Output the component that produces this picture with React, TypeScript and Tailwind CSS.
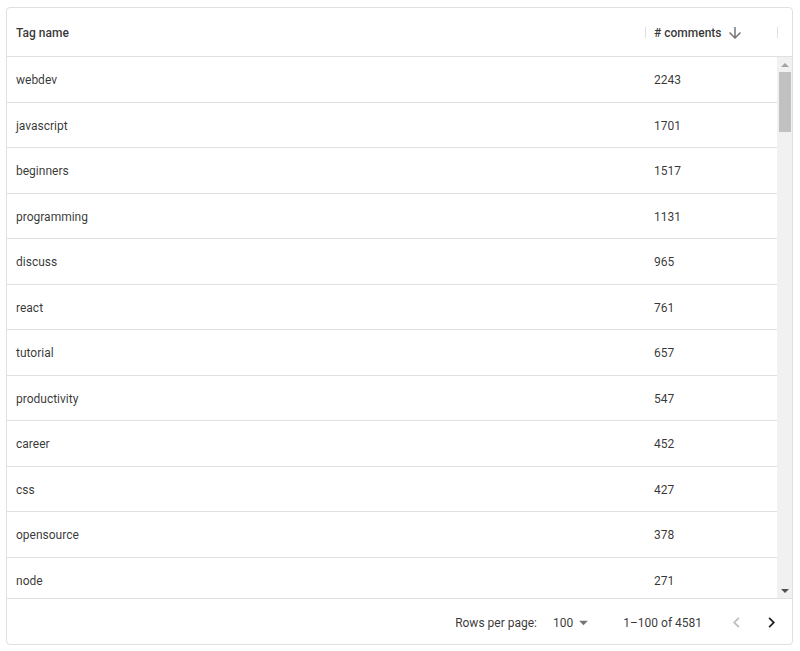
const rows = [
  { tag: "webdev", count: 2243 },
  { tag: "javascript", count: 1701 },
  { tag: "beginners", count: 1517 },
  { tag: "programming", count: 1131 },
  { tag: "discuss", count: 965 },
  { tag: "react", count: 761 },
  { tag: "tutorial", count: 657 },
  { tag: "productivity", count: 547 },
  { tag: "career", count: 452 },
  { tag: "css", count: 427 },
  { tag: "opensource", count: 378 },
  { tag: "node", count: 271 },
];

export default function App() {
  return (
    <main
      className="w-full min-h-screen bg-white text-[12px] text-[rgba(0,0,0,0.8)]"
      style={{ fontFamily: "Roboto, 'Noto Sans', sans-serif" }}
    >
      <div className="ml-[6px] pt-[7px]">
        <div className="w-[787px] h-[638px] border border-[#e0e0e0] rounded-[4px] flex flex-col overflow-hidden">
          {/* Header */}
          <div className="h-[49px] shrink-0 flex items-center border-b border-[#e0e0e0] pt-[1px]">
            <div className="w-[638px] pl-[9px] font-medium">Tag name</div>
            <div className="w-px h-[11px] bg-[#e0e0e0]" />
            <div className="w-[131px] pl-[8px] flex items-center font-medium">
              <span># comments</span>
              <svg viewBox="0 0 24 24" className="w-[18px] h-[18px] ml-[5px] fill-[#757575]">
                <path d="M20 12l-1.41-1.41L13 16.17V4h-2v12.17l-5.58-5.59L4 12l8 8 8-8z" />
              </svg>
            </div>
            <div className="w-px h-[11px] bg-[#e0e0e0]" />
          </div>

          {/* Body */}
          <div className="h-[541px] shrink-0 flex">
            <div className="w-[770px] overflow-hidden">
              {rows.map((r) => (
                <div
                  key={r.tag}
                  className="h-[45.5px] flex items-center border-b border-[#e0e0e0] pt-[2px]"
                >
                  <div className="w-[638px] pl-[9px]">{r.tag}</div>
                  <div className="w-[132px] pl-[9px]">{r.count}</div>
                </div>
              ))}
            </div>
            {/* Scrollbar */}
            <div className="w-[15px] bg-[#f1f1f1] flex flex-col items-center">
              <div className="h-[15px] w-full flex items-center justify-center">
                <div className="w-0 h-0 border-x-[4px] border-x-transparent border-b-[4px] border-b-[#a3a3a3]" />
              </div>
              <div className="w-[12px] h-[60px] bg-[#c1c1c1]" />
              <div className="flex-1" />
              <div className="h-[15px] w-full flex items-center justify-center">
                <div className="w-0 h-0 border-x-[4px] border-x-transparent border-t-[4px] border-t-[#505050]" />
              </div>
            </div>
          </div>

          {/* Footer */}
          <div className="flex-1 border-t border-[#e0e0e0] flex items-center justify-end pr-[3px] pt-[2px]">
            <span>Rows per page:</span>
            <div className="relative ml-[16px] mr-[29px] pr-[21px] flex items-center">
              <span>100</span>
              <svg viewBox="0 0 24 24" className="absolute right-0 w-[21px] h-[21px] fill-[rgba(0,0,0,0.54)]">
                <path d="M7 10l5 5 5-5z" />
              </svg>
            </div>
            <span>1–100 of 4581</span>
            <div className="ml-[17px] flex items-center">
              <button className="w-[35px] h-[35px] flex items-center justify-center">
                <svg viewBox="0 0 24 24" className="w-[21px] h-[21px] fill-[rgba(0,0,0,0.26)]">
                  <path d="M15.41 16.59 10.83 12l4.58-4.59L14 6l-6 6 6 6z" />
                </svg>
              </button>
              <button className="w-[35px] h-[35px] flex items-center justify-center">
                <svg viewBox="0 0 24 24" className="w-[21px] h-[21px] fill-[rgba(0,0,0,0.87)]">
                  <path d="M8.59 16.59 13.17 12 8.59 7.41 10 6l6 6-6 6z" />
                </svg>
              </button>
            </div>
          </div>
        </div>
      </div>
    </main>
  );
}
